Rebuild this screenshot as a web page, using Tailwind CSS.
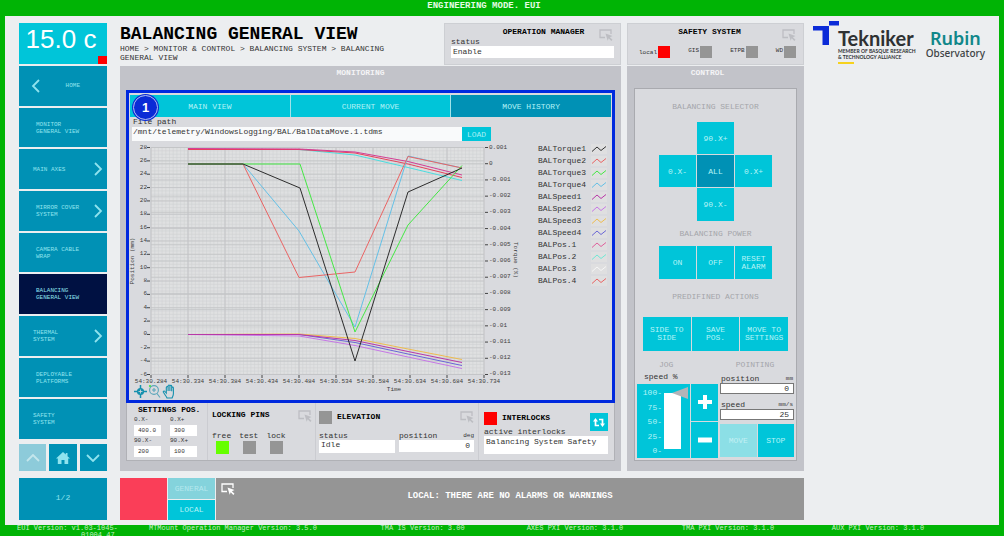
<!DOCTYPE html>
<html lang="en">
<head>
<meta charset="utf-8">
<meta name="viewport" content="width=device-width, initial-scale=1">
<title>Balancing General View</title>
<script src="https://cdn.jsdelivr.net/npm/@tailwindcss/browser@4"></script>
</head>
<body class="flex min-h-screen flex-col bg-[#00b405] px-[5px] font-['Liberation_Mono',monospace] text-[8px] leading-[9px] text-[#333]">
<svg class="hidden" aria-hidden="true">
  <symbol id="pick" viewBox="0 0 14 12"><path d="M6 8.5H1V1h11v4" fill="none" stroke="currentColor" stroke-width="1.3"/><path d="M6.5 4.5l7 2.6-2.6 1.1 2.6 2.6-1.2 1.1-2.6-2.6-1 2.4z" fill="currentColor"/></symbol>
  <symbol id="next" viewBox="0 0 9 14"><path d="M1 1l6 6-6 6" fill="none" stroke="currentColor" stroke-width="1.8"/></symbol>
</svg>

<header class="h-4 pr-9 text-center text-[9px] leading-[12px] font-bold text-[#e4fbe4]">ENGINEERING MODE. EUI</header>

<main class="flex flex-1 gap-[13px] bg-[#eceef0] pt-[7px] pr-[14px] pb-[5px] pl-[14px]">

  <nav class="flex w-[88px] shrink-0 flex-col text-[6px] leading-[7px] text-[#8fe3ee]" aria-label="Main">
    <div class="relative mb-[2px] h-[41px] bg-[#00c5d9] pr-1 text-center font-['Liberation_Sans',sans-serif] text-[26px] leading-8 text-white">15.0 c<span class="absolute right-0 bottom-0 h-2 w-[9px] bg-[#fe0000]"></span></div>
    <div class="flex flex-1 flex-col gap-[2px]">
      <a href="#" class="flex flex-1 items-center bg-[#0091b5] pr-[27px] pl-3"><svg class="h-[14px] w-[9px] rotate-180"><use href="#next"/></svg><span class="ml-auto">HOME</span></a>
      <a href="#" class="flex flex-1 items-center bg-[#0091b5] pr-1 pl-[17px]"><span>MONITOR<br>GENERAL VIEW</span></a>
      <a href="#" class="flex flex-1 items-center bg-[#0091b5] pr-1 pl-[14px]"><span>MAIN AXES</span><svg class="ml-auto h-[14px] w-[9px]"><use href="#next"/></svg></a>
      <a href="#" class="flex flex-1 items-center bg-[#0091b5] pr-1 pl-[17px]"><span>MIRROR COVER<br>SYSTEM</span><svg class="ml-auto h-[14px] w-[9px]"><use href="#next"/></svg></a>
      <a href="#" class="flex flex-1 items-center bg-[#0091b5] pr-1 pl-[17px]"><span>CAMERA CABLE<br>WRAP</span></a>
      <a href="#" aria-current="page" class="flex flex-1 items-center bg-[#001142] pr-1 pl-[17px]"><span>BALANCING<br>GENERAL VIEW</span></a>
      <a href="#" class="flex flex-1 items-center bg-[#0091b5] pr-1 pl-[14px]"><span>THERMAL<br>SYSTEM</span><svg class="ml-auto h-[14px] w-[9px]"><use href="#next"/></svg></a>
      <a href="#" class="flex flex-1 items-center bg-[#0091b5] pr-1 pl-[17px]"><span>DEPLOYABLE<br>PLATFORMS</span></a>
      <a href="#" class="flex flex-1 items-center bg-[#0091b5] pr-1 pl-[14px]"><span>SAFETY<br>SYSTEM</span></a>
    </div>
    <div class="mt-[5px] grid h-[27px] grid-cols-3 gap-[3px]">
      <button class="grid place-items-center bg-[#8dcbda] text-[#c4e6ec]" aria-label="Up"><svg class="h-2 w-[14px]" viewBox="0 0 14 8"><path d="M1 7l6-6 6 6" fill="none" stroke="currentColor" stroke-width="1.8"/></svg></button>
      <button class="grid place-items-center bg-[#0091b5]" aria-label="Home"><svg class="h-3 w-[14px]" viewBox="0 0 14 12"><path d="M7 0l2.8 2.6V1h1.7v3.200L14 6.600h-1.800V12H8.500V8h-3v4H1.800V6.600H0z" fill="currentColor"/></svg></button>
      <button class="grid place-items-center bg-[#0091b5]" aria-label="Down"><svg class="h-2 w-[14px]" viewBox="0 0 14 8"><path d="M1 1l6 6 6-6" fill="none" stroke="currentColor" stroke-width="1.8"/></svg></button>
    </div>
    <div class="mt-[7px] grid h-[42px] place-items-center bg-[#0091b5] pb-1 text-[8px]">1/2</div>
  </nav>

  <div class="flex min-w-0 flex-1 flex-col">
    <div class="flex flex-1 gap-[6px]">

      <section class="flex min-w-0 flex-1 flex-col">
        <div class="flex h-[43px] justify-between">
          <div class="w-[296px] pt-[2px]">
            <h1 class="text-[18px] leading-[18px] font-bold whitespace-nowrap text-black">BALANCING GENERAL VIEW</h1>
            <p class="mt-px text-[8px] leading-[9px]">HOME &gt; MONITOR &amp; CONTROL &gt; BALANCING SYSTEM &gt; BALANCING GENERAL VIEW</p>
          </div>
          <div class="relative h-[42px] w-[177px] border border-[#cdcfd3] bg-[#d9dade] px-[6px] pt-[3px]">
            <h2 class="pl-[22px] text-center font-bold text-black">OPERATION MANAGER</h2>
            <svg class="absolute top-[5px] right-[7px] h-3 w-[14px] text-[#bdbec3]"><use href="#pick"/></svg>
            <label for="om" class="mt-px block">status</label>
            <input id="om" readonly value="Enable" class="block h-3 w-full bg-white px-[2px] pb-[2px]">
          </div>
        </div>

        <div class="flex flex-1 flex-col bg-[#c2c3c9] px-[6px] pb-[10px]">
          <h2 class="h-6 pt-[2px] pr-5 text-center font-bold text-[#f4f4f6]">MONITORING</h2>

          <div class="relative flex flex-1 flex-col border-[3px] border-[#0029de] bg-[#d9dade] pt-[2px]">
            <div class="absolute top-[1px] left-[3px] grid size-[27px] place-items-center rounded-full bg-[#0a2bd6] font-['Liberation_Sans',sans-serif] text-[13px] font-bold text-white"><span class="grid size-[25px] place-items-center rounded-full border border-[#b5c0f2]">1</span></div>
            <div class="mx-px grid h-[22px] grid-cols-3 gap-px bg-[#9fe3ea] text-[#b2f2f6]" role="tablist">
              <button role="tab" class="bg-[#00c5d9]">MAIN VIEW</button>
              <button role="tab" class="bg-[#00c5d9]">CURRENT MOVE</button>
              <button role="tab" aria-selected="true" class="bg-[#0091b5]">MOVE HISTORY</button>
            </div>
            <label for="path" class="block pl-1">File path</label>
            <div class="mt-px flex h-[14px] pl-[3px]">
              <input id="path" value="/mnt/telemetry/WindowsLogging/BAL/BalDataMove.1.tdms" class="w-[330px] bg-[#f9fafb] px-px pb-[6px]">
              <button class="w-[29px] bg-[#00c5d9] text-[#a8f0f5]">LOAD</button>
            </div>
            <div class="flex">
              <svg id="chart" class="h-[259px] w-[391px] shrink-0 text-[6px]" viewBox="129 141 391 259" role="img" aria-label="Move history"></svg>
              <ul id="legend" class="ml-[18px] w-[69px] pt-[2px] leading-3"></ul>
            </div>
            <svg class="absolute bottom-[1px] left-1 h-[15px] w-[44px] text-[#1590ae]" viewBox="0 0 44 15" aria-label="Graph tools">
              <path d="M7.500 1v13M1 7.500h13" stroke="currentColor" stroke-width="1.500"/><circle cx="7.500" cy="7.500" r="3.600" fill="currentColor"/><path d="M7.500 5.500v4M5.500 7.500h4" stroke="#d9dade" stroke-width=".8"/>
              <circle cx="21" cy="6" r="4.400" fill="none" stroke="#5ba5ba" stroke-width="1.100"/><path d="M19 6h4M21 4v4M24 9.500l3 4" stroke="#5ba5ba" stroke-width="1.100"/><circle cx="17" cy="2" r="1.100" fill="#3fe33f"/>
              <path d="M34 14c-.5-1.500-2-3-3.600-5.700-.6-1.100.8-1.700 1.500-.8l1.400 1.600V3.500c0-1.300 1.700-1.300 1.800 0V7 2c0-1.300 1.800-1.300 1.800 0v5V2.300c0-1.200 1.800-1.200 1.800 0V7.300 4c.1-1.200 1.700-1.200 1.700 0v5.500c0 2-.8 3-1.300 4.500z" fill="none" stroke="currentColor" stroke-width="1.100"/>
            </svg>
          </div>

          <div class="flex h-[58px] border-x border-b border-[#b0b1b6] bg-[#d9dade]">
            <div class="w-20 pt-[2px] pl-[7px]">
              <h3 class="pl-1 font-bold whitespace-nowrap text-black">SETTINGS POS.</h3>
              <div class="mt-px grid grid-cols-[27px_27px] gap-x-[9px] text-[6px]">
                <label class="block leading-[10px]">0.X-<input value="400.0" class="block h-[11px] w-full bg-white px-1 leading-[9px]"></label>
                <label class="block leading-[10px]">0.X+<input value="300" class="block h-[11px] w-full bg-white px-1 leading-[9px]"></label>
                <label class="block leading-[10px]">90.X-<input value="200" class="block h-[11px] w-full bg-white px-1 leading-[9px]"></label>
                <label class="block leading-[10px]">90.X+<input value="100" class="block h-[11px] w-full bg-white px-1 leading-[9px]"></label>
              </div>
            </div>
            <div class="w-[108px] border-l border-[#cbccd1] pt-[7px] pr-[3px] pl-1">
              <div class="flex justify-between"><h3 class="font-bold text-black">LOCKING PINS</h3><svg class="h-3 w-[14px] text-[#bdbec3]"><use href="#pick"/></svg></div>
              <div class="mt-[9px] flex gap-2">
                <div>free<span class="mt-px ml-1 block size-[13px] bg-[#66ff00]"></span></div>
                <div>test<span class="mt-px ml-1 block size-[13px] bg-[#959595]"></span></div>
                <div>lock<span class="mt-px ml-1 block size-[13px] bg-[#959595]"></span></div>
              </div>
            </div>
            <div class="w-[163px] border-l border-[#cbccd1] pt-2 pr-1 pl-[3px]">
              <div class="flex"><span class="size-[13px] bg-[#959595]"></span><h3 class="pt-px pl-[5px] font-bold text-black">ELEVATION</h3><svg class="ml-auto h-3 w-[14px] text-[#bdbec3]"><use href="#pick"/></svg></div>
              <div class="mt-[7px] flex gap-1">
                <label class="w-[76px]">status<input readonly value="Idle" class="block h-[13px] w-full bg-white px-[2px] pb-1"></label>
                <label class="flex-1"><span class="flex justify-between">position<small class="text-[6px]">deg</small></span><input readonly value="0" class="block h-3 w-full bg-white px-1 pb-[2px] text-right"></label>
              </div>
            </div>
            <div class="flex-1 border-l border-[#cbccd1] pt-[9px] pr-[6px] pl-[5px]">
              <div class="flex h-[15px]"><span class="size-[13px] bg-[#fe0000]"></span><h3 class="pt-px pl-[5px] font-bold text-black">INTERLOCKS</h3>
                <button class="mt-px ml-auto grid h-[18px] w-[18px] place-items-center bg-[#00c5d9]" aria-label="Reset interlocks"><svg class="h-[9px] w-3" viewBox="0 0 12 9"><path d="M2.500 2.500V7.500h3.500M6 1.500h3.500v5" fill="none" stroke="#fff" stroke-width="1.700"/><path d="M0 3.500L2.500 0 5 3.500zM7 5.500L9.500 9 12 5.500z" fill="#fff"/></svg></button></div>
              <label>active interlocks<input readonly value="Balancing System Safety" class="block h-[18px] w-full bg-white px-[2px] pb-2"></label>
            </div>
          </div>
        </div>
      </section>

      <section class="flex w-[177px] shrink-0 flex-col">
        <div class="relative mb-px h-[42px] border border-[#cdcfd3] bg-[#d9dade] pt-[3px] pr-[7px] pl-[11px]">
          <h2 class="pr-4 text-center font-bold text-black">SAFETY SYSTEM</h2>
          <svg class="absolute top-[5px] right-[7px] h-3 w-[14px] text-[#bdbec3]"><use href="#pick"/></svg>
          <div class="mt-[10px] flex justify-between text-[6px]">
            <div class="flex items-center gap-px">local<span class="size-3 bg-[#fe0000]"></span></div>
            <div class="flex gap-px">GIS<span class="size-3 bg-[#959595]"></span></div>
            <div class="flex gap-px">ETPB<span class="size-3 bg-[#959595]"></span></div>
            <div class="flex gap-px">WD<span class="size-3 bg-[#959595]"></span></div>
          </div>
        </div>
        <div class="flex flex-1 flex-col bg-[#c2c3c9] px-[7px] pb-[10px]">
          <h2 class="h-[22px] pt-[2px] pr-4 text-center font-bold text-[#f4f4f6]">CONTROL</h2>
          <div class="flex-1 border border-[#a9aaaf] bg-[#d9dade] px-[2px] pt-[13px] text-[#b5f4f7]">
            <h3 class="text-center text-[#a4a5aa]">BALANCING SELECTOR</h3>
            <div class="mx-auto mt-[11px] grid w-[113px] grid-cols-3 grid-rows-[32px_32px_33px] gap-px">
              <button class="col-start-2 bg-[#00c5d9]">90.X+</button>
              <button class="col-start-1 bg-[#00c5d9]">0.X-</button>
              <button class="bg-[#0091b5]">ALL</button>
              <button class="bg-[#00c5d9]">0.X+</button>
              <button class="col-start-2 bg-[#00c5d9]">90.X-</button>
            </div>
            <h3 class="mt-2 text-center text-[#a4a5aa]">BALANCING POWER</h3>
            <div class="mx-auto mt-2 grid h-[33px] w-[113px] grid-cols-3 gap-px leading-[8px]">
              <button class="bg-[#00c5d9]">ON</button>
              <button class="bg-[#00c5d9]">OFF</button>
              <button class="bg-[#00c5d9]">RESET<br>ALARM</button>
            </div>
            <h3 class="mt-[13px] text-center text-[#a4a5aa]">PREDIFINED ACTIONS</h3>
            <div class="mx-auto mt-4 grid h-[34px] w-[145px] grid-cols-3 gap-px leading-[8px]">
              <button class="bg-[#00c5d9]">SIDE TO<br>SIDE</button>
              <button class="bg-[#00c5d9]">SAVE<br>POS.</button>
              <button class="bg-[#00c5d9]">MOVE TO<br>SETTINGS</button>
            </div>
            <div class="mt-[9px] flex gap-[2px]">
              <div class="w-[81px]">
                <h3 class="pl-[22px] text-[#a4a5aa]">JOG</h3>
                <label for="jog" class="mt-[3px] block pl-[7px] text-[#333]">speed %</label>
                <div class="mt-[3px] grid h-[74px] grid-cols-[53px_27px] grid-rows-2 gap-px">
                  <div class="row-span-2 flex bg-[#00c5d9] pt-[3px]">
                    <ul class="flex h-[68px] w-[25px] flex-col justify-between pt-px text-right"><li>100-</li><li>75-</li><li>50-</li><li>25-</li><li>0-</li></ul>
                    <input id="jog" type="range" value="100" class="ml-[2px] h-[62px] w-6 appearance-none bg-[linear-gradient(white,white)] bg-[length:17px_56px] bg-[position:0_6px] bg-no-repeat [writing-mode:vertical-lr] [direction:rtl] [&::-webkit-slider-thumb]:h-3 [&::-webkit-slider-thumb]:w-4 [&::-webkit-slider-thumb]:translate-x-1 [&::-webkit-slider-thumb]:appearance-none [&::-webkit-slider-thumb]:bg-[#b4b4b8] [&::-webkit-slider-thumb]:[clip-path:polygon(0_50%,100%_0,100%_100%)]">
                  </div>
                  <button class="grid place-items-center bg-[#00c5d9]" aria-label="Increase"><svg class="size-[14px]" viewBox="0 0 14 14"><path d="M7 0v14M0 7h14" stroke="#fff" stroke-width="4"/></svg></button>
                  <button class="grid place-items-center bg-[#00c5d9]" aria-label="Decrease"><svg class="size-[14px]" viewBox="0 0 14 14"><path d="M0 7h14" stroke="#fff" stroke-width="5"/></svg></button>
                </div>
              </div>
              <div class="flex-1 text-[#333]">
                <h3 class="pr-1 text-center text-[#a4a5aa]">POINTING</h3>
                <label class="mt-[5px] block"><span class="flex justify-between px-px">position<small class="text-[6px]">mm</small></span><input value="0" class="block h-[11px] w-full border border-[#777] bg-white pr-1 text-right"></label>
                <label class="mt-[6px] block"><span class="flex justify-between px-px">speed<small class="text-[6px]">mm/s</small></span><input value="25" class="block h-[11px] w-full border border-[#777] bg-white pr-1 text-right"></label>
                <div class="mt-1 grid h-[33px] grid-cols-2 gap-px text-[#b5f4f7]">
                  <button disabled class="bg-[#8cdfe6] text-[#c3f0f4]">MOVE</button>
                  <button class="bg-[#00c5d9]">STOP</button>
                </div>
              </div>
            </div>
          </div>
        </div>
      </section>
    </div>

    <div class="mt-[7px] flex h-[42px] gap-px">
      <div class="w-[47px] bg-[#fa3e58]"></div>
      <div class="grid w-[47px] gap-px">
        <button class="bg-[#84d3dc] text-[#b5e8ee]">GENERAL</button>
        <button class="bg-[#00c5d9] text-[#b5f4f7]">LOCAL</button>
      </div>
      <div class="relative grid flex-1 place-items-center bg-[#959595] pb-[6px] text-[9px] font-bold text-white">
        <svg class="absolute top-[5px] left-[5px] h-3 w-[14px]"><use href="#pick"/></svg>
        LOCAL: THERE ARE NO ALARMS OR WARNINGS
      </div>
    </div>
  </div>

  <aside class="-ml-1 flex w-[172px] shrink-0 justify-between">
    <div class="flex h-11">
      <svg class="-mt-[2px] h-[26px] w-[26px] shrink-0" viewBox="0 0 26 26"><path d="M0 5h16V24H9.500V9.500H0zM16 0h10v4.500H16z" fill="#0b2bd8"/></svg>
      <div class="-ml-px w-[77px] whitespace-nowrap font-['Lato',sans-serif] text-[#2e3133]">
        <div class="pt-[5px] text-[20px] leading-5 font-bold">Tekniker</div>
        <div class="text-[5px] leading-[6px] font-bold">MEMBER OF BASQUE RESEARCH<br>&amp; TECHNOLOGY ALLIANCE</div>
        <div class="mt-[2px] h-[2px] w-4 bg-[#f6d21e]"></div>
      </div>
    </div>
    <div class="pt-[5px] text-center font-['Noto_Sans',sans-serif]">
      <div class="text-[18px] leading-[21px] font-semibold text-[#10878a]">Rubin</div>
      <div class="text-[10px] leading-[9px] font-medium text-[#3d4244]">Observatory</div>
    </div>
  </aside>
</main>

<footer class="grid h-[11px] grid-cols-[131fr_230fr_145fr_154fr_149fr_166fr] overflow-hidden pl-3 text-[7px] leading-[7px] whitespace-nowrap text-[#c4f0c4]">
  <span>EUI Version: v1.03-1045-<br><span class="pl-16">01004.47</span></span>
  <span>MTMount Operation Manager Version: 3.5.0</span>
  <span>TMA IS Version: 3.00</span>
  <span>AXES PXI Version: 3.1.0</span>
  <span>TMA PXI Version: 3.1.0</span>
  <span>AUX PXI Version: 3.1.0</span>
</footer>

<script>
const L = 151, R = 484, T = 147.5, B = 374.5;
const line = (x1, y1, x2, y2, c, w = 1) => `<path d="M${x1} ${y1}L${x2} ${y2}" stroke="${c}" stroke-width="${w}"/>`;
const text = (x, y, s, a = 'middle', extra = '') => `<text x="${x}" y="${y}" text-anchor="${a}" fill="#3c3c3c" ${extra}>${s}</text>`;
let g = `<rect x="${L}" y="${T}" width="${R - L}" height="${B - T}" fill="#dfe0e1"/>`;
// minor grid
for (let i = 0; i <= 90; i++) g += line(L + i * 3.7, T, L + i * 3.7, B, '#d0d1d3', .6);
for (let i = 0; i <= 68; i++) g += line(L, T + i * 3.338, R, T + i * 3.338, '#d0d1d3', .6);
// time axis
for (let i = 0; i <= 9; i++) {
  const x = L + i * 37;
  g += line(x, T, x, B, '#c3c4c6') + line(x, 375, x, 378, '#444');
  g += text(x, 383, '54:30.' + (284 + i * 50));
}
// position axis
for (let i = 0; i <= 17; i++) {
  const y = T + i * 13.353;
  g += line(L, y, R, y, '#c3c4c6', .8) + line(147, y, 150, y, '#444') + text(147, y + 1, 28 - i * 2, 'end');
}
// torque axis
['0.001', '0', '-0.001', '-0.002', '-0.003', '-0.004', '-0.005', '-0.006', '-0.007', '-0.008', '-0.009', '-0.01', '-0.011', '-0.012', '-0.013'].forEach((s, i) => {
  const y = T + i * 16.214;
  g += line(L, y, R, y, '#c3c4c6', .8) + line(485, y, 488, y, '#444') + text(489, y + 1, s, 'start');
});
g += text(394, 391, 'Time');
g += text(134, 261, 'Position (mm)', 'middle', 'transform="rotate(-90 134 261)"');
g += text(514, 260, 'Torque (%)', 'middle', 'transform="rotate(90 514 260)"');
[
  ['#4cdde0', '188,149.5 299,149.5 355,155 408,167.500 462,180.500'],
  ['#e8405c', '188,149.5 299,149.5 355,153 408,164 462,177.500'],
  ['#d33c94', '188,148.5 299,149 355,152 408,161.500 462,175'],
  ['#c678e6', '188,334.5 299,336 355,345.500 408,357 462,368.500'],
  ['#6a66d6', '188,334.5 299,334.500 355,342.500 408,354 462,365.500'],
  ['#eebc50', '188,334.5 299,334 355,338.500 408,349 462,359.500'],
  ['#b838a8', '188,334.5 299,334.500 355,340.500 408,351.500 462,362.500'],
  ['#64c0e6', '188,164 243,164 299,231 355,327 408,156 462,168'],
  ['#ea6464', '188,164 243,164 299,277.500 355,272 408,156.500 462,168'],
  ['#44e844', '188,164 243,164 300,164 355,332 408,225 462,165.500'],
  ['#2c2c2c', '188,164 243,164 300,188 355,361 408,192 462,168']
].forEach(([c, p]) => g += `<polyline points="${p}" fill="none" stroke="${c}" stroke-width="1"/>`);
document.getElementById('chart').innerHTML = g;
document.getElementById('legend').innerHTML = [
  ['BALTorque1', '#333'], ['BALTorque2', '#ea6464'], ['BALTorque3', '#44e844'], ['BALTorque4', '#64c0e6'],
  ['BALSpeed1', '#b838a8'], ['BALSpeed2', '#c678e6'], ['BALSpeed3', '#eebc50'], ['BALSpeed4', '#6a66d6'],
  ['BALPos.1', '#e0609c'], ['BALPos.2', '#6fe8d4'], ['BALPos.3', '#f6f6f6'], ['BALPos.4', '#ea6464']
].map(([n, c]) => `<li class="flex items-center justify-between">${n}<svg class="h-[10px] w-4 bg-[#dfdfe0]" viewBox="0 0 16 10"><path d="M1 7.500l5-4.500 4 3.500 5-4" fill="none" stroke="${c}"/></svg></li>`).join('');
</script>
</body>
</html>
